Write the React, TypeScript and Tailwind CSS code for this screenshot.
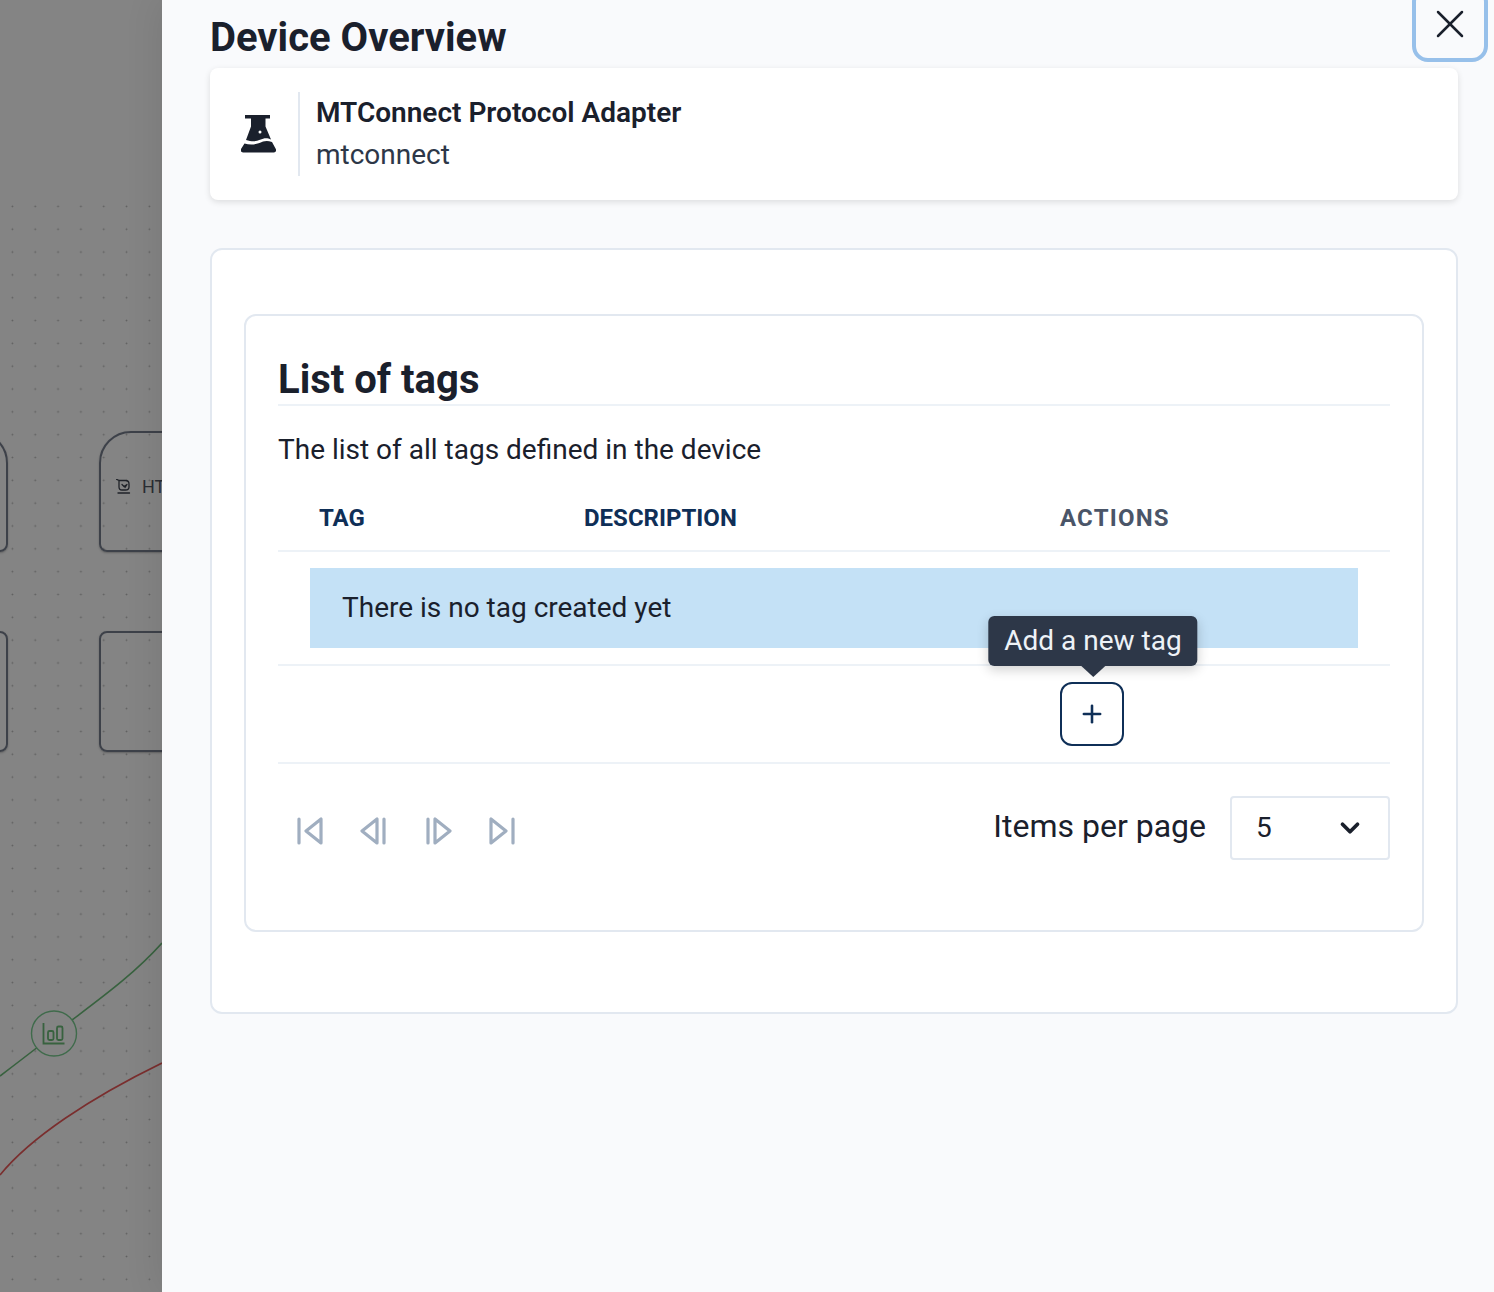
import { X, Plus, ChevronDown } from "lucide-react";

function FlaskIcon() {
  return (
    <svg width="36" height="40" viewBox="0 0 36 40" className="text-[#1a202c]">
      <path
        fill="currentColor"
        fillRule="evenodd"
        d="M4 1h25v3.500h-4.500v8l5.500 13c-4-2-7-1.500-11 .3-4 1.800-8 2-14 .2l5-13.500v-8H4zM19 16.500a1.500 1.500 0 1 0 0 3 1.500 1.500 0 0 0 0-3z"
      />
      <path
        fill="currentColor"
        d="M3.500 29.500c5 1.500 10 1.300 15-.5 4-1.800 7-2.700 12.500-1l3.800 7c.8 1.700-.2 3.500-2 3.500H2c-1.800 0-2.800-1.800-2-3.500z"
      />
    </svg>
  );
}

function PagerIcon({ flip, bar }: { flip?: boolean; bar: "outer" | "inner" }) {
  return (
    <svg width="28" height="28" viewBox="0 0 28 28" fill="none" stroke="#a0aec0" strokeWidth="3.200" strokeLinecap="round" strokeLinejoin="round" className={flip ? "-scale-x-100" : ""}>
      {bar === "outer" ? (
        <>
          <path d="M3 2v24" />
          <path d="M25 2v24L10 14z" />
        </>
      ) : (
        <>
          <path d="M24 2v24" />
          <path d="M17 2v24L2 14z" />
        </>
      )}
    </svg>
  );
}

function NodeBox({ className, children }: { className: string; children?: React.ReactNode }) {
  return <div className={"absolute border-2 border-[#3d4149] shadow-[0_1px_2px_rgba(0,0,0,0.25)] " + className}>{children}</div>;
}

function Canvas() {
  return (
    <div className="relative h-full w-[162px] shrink-0 overflow-hidden bg-[#848484]">
      <div className="absolute inset-x-0 bottom-0 top-[195px] bg-[radial-gradient(#5f5f5f_0.800px,transparent_1.100px)] bg-size-[22.830px_22.830px] bg-position-[1px_0px]" />
      <NodeBox className="left-[-120px] top-[431px] h-[121px] w-[128px] rounded-tr-[32px] rounded-br-lg" />
      <NodeBox className="left-[99px] top-[431px] h-[121px] w-[128px] rounded-tl-[32px] rounded-bl-lg">
        <div className="flex h-full items-center gap-[10px] pb-[10px] pl-[15px] font-['Roboto',sans-serif] text-lg text-[#2a2d33]">
          <svg width="16" height="16" viewBox="0 0 16 16" fill="none" stroke="#1f2228" strokeWidth="1.300" strokeLinecap="round" strokeLinejoin="round">
            <path d="M0 0l3 1.500h6.500c2 0 3.500 1.500 3.500 3.500v3c0 2-1.500 3-3.500 3H6c-2 0-3-1.500-3-3V1.500" />
            <path d="M6 5.500l2 2 3-2-2 3" />
            <path d="M2 14h11.500" />
          </svg>
          HTTP
        </div>
      </NodeBox>
      <NodeBox className="left-[-120px] top-[631px] h-[121px] w-[128px] rounded-r-lg" />
      <NodeBox className="left-[99px] top-[631px] h-[121px] w-[128px] rounded-l-lg" />
      <svg width="162" height="1292" viewBox="0 0 162 1292" fill="none" className="absolute left-0 top-0">
        <path d="M0 1076C25 1057 50 1038 72 1020C105 995 135 973 162 943" stroke="#38623f" strokeWidth="1.600" />
        <path d="M0 1175C30 1138 90 1098 162 1063" stroke="#7a2e2e" strokeWidth="1.600" />
        <circle cx="54" cy="1033.500" r="22.500" fill="#848484" stroke="#3f6b4b" strokeWidth="1.400" />
        <g stroke="#38623f" strokeWidth="1.800">
          <path d="M43.500 1023v20.500h21" />
          <rect x="48" y="1031" width="5.500" height="9" rx="1.500" />
          <rect x="57" y="1026.500" width="5.500" height="13.500" rx="1.500" />
        </g>
      </svg>
    </div>
  );
}

export default function App() {
  return (
    <div className="flex h-[1292px] w-[1494px] overflow-hidden font-['Roboto',sans-serif] text-[#1a202c]">
      <Canvas />
      <div className="relative flex-1 bg-[#f9fafc] pl-12 pr-9 shadow-[0_0_36px_rgba(0,0,0,0.1)]">
        <button className="absolute right-[10px] top-[-10px] flex size-[68px] items-center justify-center rounded-xl outline-4 outline-[#97c0ea]">
          <X size={48} strokeWidth={1.250} />
        </button>

        <div className="flex h-[68px] items-center pt-[8px]">
          <h1 className="text-[40px] font-bold leading-none">Device Overview</h1>
        </div>

        <div className="flex h-[132px] items-center rounded-lg bg-white pl-[25px] shadow-[0_2px_6px_rgba(0,0,0,0.12)]">
          <div className="flex w-12 justify-center">
            <FlaskIcon />
          </div>
          <div className="ml-[15px] h-[84px] w-0.5 bg-[#e2e8f0]" />
          <div className="ml-4 flex flex-col gap-[11px] pb-0.5 text-[28px] leading-[31px]">
            <div className="font-semibold">MTConnect Protocol Adapter</div>
            <div className="text-[#2d3748]">mtconnect</div>
          </div>
        </div>

        <div className="mt-12 rounded-xl border-2 border-[#e2e8f0] bg-white px-8 pb-20 pt-16">
          <div className="h-[618px] rounded-xl border-2 border-[#e2e8f0] px-8">
            <h2 className="flex h-[90px] items-end border-b-2 border-[#edf2f7] text-[40px] font-bold leading-[48px]">
              List of tags
            </h2>
            <p className="mt-[28px] text-[28px] leading-8 text-[#1a202c]">The list of all tags defined in the device</p>

            <div className="mt-[20px] flex h-[66px] items-center border-b-2 border-[#edf2f7] pl-[41px] text-2xl font-bold text-[#0f2f57]">
              <div className="w-[265px]">TAG</div>
              <div className="w-[476px]">DESCRIPTION</div>
              <div className="tracking-[1.200px] text-[#4a5568]">ACTIONS</div>
            </div>

            <div className="border-b-2 border-[#edf2f7] px-8 py-4">
              <div className="flex h-20 items-center bg-[#c4e1f6] px-8 text-[28px]">There is no tag created yet</div>
            </div>

            <div className="flex border-b-2 border-[#edf2f7] py-4 pl-[782px]">
              <div className="relative">
                <button className="flex size-16 items-center justify-center rounded-xl border-2 border-[#0f2f57] text-[#0f2f57]">
                  <Plus size={28} strokeWidth={2.200} />
                </button>
                <div className="absolute bottom-[80px] left-[calc(50%+1px)] -translate-x-1/2 whitespace-nowrap rounded-md bg-[#2d3748] px-4 py-[5px] text-[28px] leading-10 text-[#edf2f7] shadow-[0_4px_12px_rgba(0,0,0,0.18)]">
                  Add a new tag
                  <div className="absolute left-1/2 top-full h-0 w-0 -translate-x-1/2 border-x-12 border-t-11 border-x-transparent border-t-[#2d3748]" />
                </div>
              </div>
            </div>

            <div className="mt-8 flex h-16 items-center justify-between">
              <div className="flex items-center gap-[36px] pl-[18px] pt-1.5">
                <PagerIcon bar="outer" />
                <PagerIcon bar="inner" />
                <PagerIcon bar="inner" flip />
                <PagerIcon bar="outer" flip />
              </div>
              <div className="flex items-center gap-6">
                <span className="pb-[5px] text-[32px] leading-10 text-[#1a202c]">Items per page</span>
                <div className="flex h-16 w-40 items-center justify-between rounded border-2 border-[#e2e8f0] pl-6 pr-[23px] text-[28px]">
                  5
                  <ChevronDown size={30} strokeWidth={3} />
                </div>
              </div>
            </div>
          </div>
        </div>
      </div>
    </div>
  );
}
